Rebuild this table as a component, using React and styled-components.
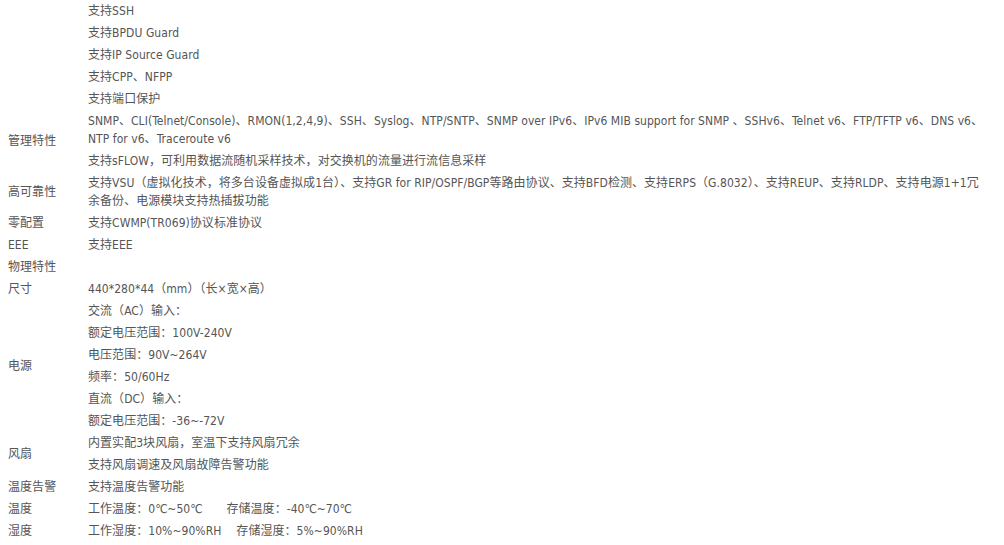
import React from 'react';
import styled, { createGlobalStyle } from 'styled-components';

const GlobalStyle = createGlobalStyle`
  html, body {
    margin: 0;
    padding: 0;
    background: #fff;
  }
  body {
    font-family: "DejaVu Sans Condensed", "DejaVu Sans", "Noto Sans CJK SC", sans-serif;
    font-size: 12px;
    letter-spacing: 0.05px;
    color: #555;
  }
`;

const specs = [
  {
    label: '',
    lines: [
      ['支持SSH'],
      ['支持BPDU Guard'],
      ['支持IP Source Guard'],
      ['支持CPP、NFPP'],
      ['支持端口保护']
    ]
  },
  {
    label: '管理特性',
    lines: [
      [
        'SNMP、CLI(Telnet/Console)、RMON(1,2,4,9)、SSH、Syslog、NTP/SNTP、SNMP over IPv6、IPv6 MIB support for SNMP 、SSHv6、Telnet v6、FTP/TFTP v6、DNS v6、',
        'NTP for v6、Traceroute v6'
      ],
      ['支持sFLOW，可利用数据流随机采样技术，对交换机的流量进行流信息采样']
    ]
  },
  {
    label: '高可靠性',
    lines: [
      [
        '支持VSU（虚拟化技术，将多台设备虚拟成1台）、支持GR for RIP/OSPF/BGP等路由协议、支持BFD检测、支持ERPS（G.8032）、支持REUP、支持RLDP、支持电源1+1冗',
        '余备份、电源模块支持热插拔功能'
      ]
    ]
  },
  { label: '零配置', lines: [['支持CWMP(TR069)协议标准协议']] },
  { label: 'EEE', lines: [['支持EEE']] },
  { label: '物理特性', lines: [['']] },
  { label: '尺寸', lines: [['440*280*44（mm）（长×宽×高）']] },
  {
    label: '电源',
    lines: [
      ['交流（AC）输入：'],
      ['额定电压范围：100V-240V'],
      ['电压范围：90V~264V'],
      ['频率：50/60Hz'],
      ['直流（DC）输入：'],
      ['额定电压范围：-36~-72V']
    ]
  },
  {
    label: '风扇',
    lines: [
      ['内置实配3块风扇，室温下支持风扇冗余'],
      ['支持风扇调速及风扇故障告警功能']
    ]
  },
  { label: '温度告警', lines: [['支持温度告警功能']] },
  {
    label: '温度',
    pairs: [
      { text: '工作温度：0℃~50℃', gap: 24 },
      { text: '存储温度：-40℃~70℃' }
    ]
  },
  {
    label: '湿度',
    pairs: [
      { text: '工作湿度：10%~90%RH', gap: 15 },
      { text: '存储湿度：5%~90%RH' }
    ]
  }
];

const Table = styled.div`
  display: flex;
  flex-direction: column;
  width: 978px;
  padding-left: 8px;
`;

const Group = styled.div`
  display: flex;
  align-items: stretch;
`;

const Label = styled.div`
  width: 80px;
  flex-shrink: 0;
  display: flex;
  align-items: center;
  line-height: 18px;
`;

const Values = styled.div`
  flex: 1;
  display: flex;
  flex-direction: column;
`;

const Cell = styled.div`
  padding: 2px 0;
  line-height: 18px;
  min-height: 18px;
  white-space: nowrap;
`;

const Piece = styled.span`
  display: inline-block;
  margin-right: ${({ gap }) => (gap ? `${gap}px` : '0')};
`;

export default function App() {
  return (
    <>
      <GlobalStyle />
      <Table>
        {specs.map((group, i) => (
          <Group key={i}>
            <Label>{group.label}</Label>
            <Values>
              {group.pairs ? (
                <Cell>
                  {group.pairs.map(p => (
                    <Piece key={p.text} gap={p.gap}>{p.text}</Piece>
                  ))}
                </Cell>
              ) : (
                group.lines.map((line, j) => (
                  <Cell key={j}>
                    {line.map((part, k) => (
                      <React.Fragment key={k}>
                        {k > 0 && <br />}
                        {part}
                      </React.Fragment>
                    ))}
                  </Cell>
                ))
              )}
            </Values>
          </Group>
        ))}
      </Table>
    </>
  );
}
